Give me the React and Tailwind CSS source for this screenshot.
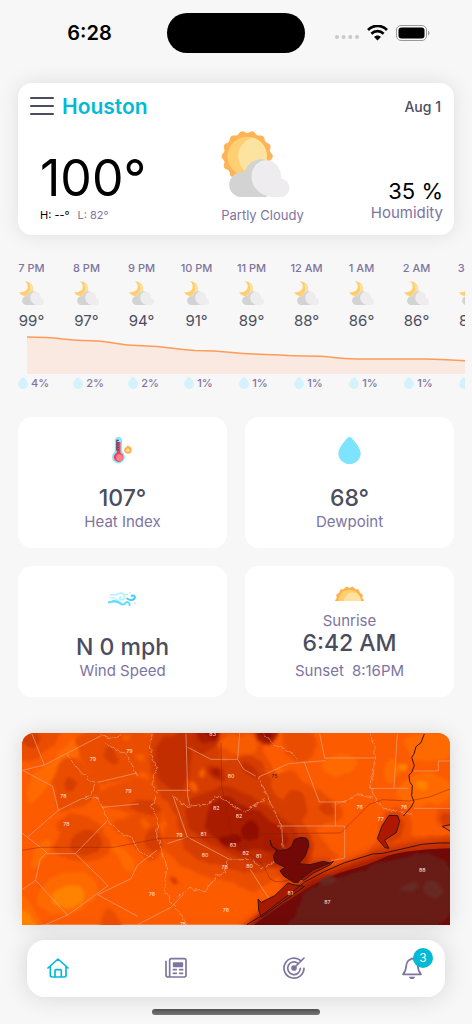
import React from 'react';

const hours = [
    { time: '7 PM', temp: 99, rain: 4 },
    { time: '8 PM', temp: 97, rain: 2 },
    { time: '9 PM', temp: 94, rain: 2 },
    { time: '10 PM', temp: 91, rain: 1 },
    { time: '11 PM', temp: 89, rain: 1 },
    { time: '12 AM', temp: 88, rain: 1 },
    { time: '1 AM', temp: 86, rain: 1 },
    { time: '2 AM', temp: 86, rain: 1 },
    { time: '3 AM', temp: 85, rain: 1 },
];

const scallop = (cx, cy, r, count) => {
    const points = [];
    for (let i = 0; i <= 240; i++) {
        const a = (i / 240) * Math.PI * 2;
        const radius = r * (0.955 + 0.045 * Math.cos(count * a));
        points.push(`${(cx + radius * Math.cos(a)).toFixed(1)} ${(cy + radius * Math.sin(a)).toFixed(1)}`);
    }
    return `M${points.join('L')}Z`;
};

// closed curve rounded through the midpoints of the given outline
const blob = (outline) => {
    const pts = outline.split(' ').map((p) => p.split(',').map(Number));
    const mid = (a, b) => `${(a[0] + b[0]) / 2} ${(a[1] + b[1]) / 2}`;
    const last = pts[pts.length - 1];
    const curves = pts.map((p, i) => `Q${p[0]} ${p[1]} ${mid(p, pts[(i + 1) % pts.length])}`);
    return `M${mid(last, pts[0])}${curves.join('')}Z`;
};

function Cloud() {
    return (
        <>
            <path fill="#d3d3d4" d="M61 198a37 37 0 0 1 0-74c2 0 5 0 8 1a57 57 0 0 1 55-41c30 0 30 114 10 114z" />
            <path fill="#eeecee" d="M152 198c-34-4-61-29-61-61 0-28 19-49 45-49 25 0 44 22 45 55a28 28 0 0 1 2 55z" />
        </>
    );
}

function SunCloud() {
    return (
        <svg viewBox="0 0 212 198" className="h-[66px] w-[71px]" aria-hidden="true">
            <path fill="#ffb357" d={scallop(78, 76, 77, 14)} />
            <circle cx="78" cy="76" r="59" fill="#ffcf71" />
            <path fill="#fde3a0" d="M95 20c25 6 42 29 42 56s-17 50-42 56c-26-6-44-29-44-56s18-50 44-56z" />
            <Cloud />
        </svg>
    );
}

function MoonCloud() {
    return (
        <svg viewBox="0 0 75 70" className="h-6 w-[26px]" aria-hidden="true">
            <path fill="#ffce71" d="M16 1c14 0 25 10 25 22S31 44 20 44C10 44 3 39 0 32c14 3 25-5 25-16 0-6-3-11-9-15z" />
            <path fill="#fde3a0" d="M28 6c8 4 12 10 12 17 0 11-9 20-20 20 12-8 17-22 8-37z" />
            <g transform="scale(.355)">
                <Cloud />
            </g>
        </svg>
    );
}

function Drop({ className }) {
    return (
        <svg viewBox="0 0 67 81" className={className} fill="currentColor" aria-hidden="true">
            <path d="M33.500 0c3 0 5 2 7 4C53 18 67 35 67 49a33.500 32 0 0 1-67 0C0 35 14 18 26.500 4c2-2 4-4 7-4z" />
        </svg>
    );
}

function Thermometer() {
    return (
        <svg viewBox="0 0 62 80" className="h-[27px] w-[21px]" aria-hidden="true">
            <path fill="#8ae6fc" d="M8 11a11 11 0 0 1 22 0v33a19 19 0 1 1-22 0z" />
            <path fill="#ee4257" d="M14 15h11v32a14 14 0 1 1-11 0z" />
            <circle cx="22" cy="61" r="10" fill="#ff8091" />
            <path stroke="#59415a" strokeWidth="3" d="M13 10h7M13 17h7M13 24h7M13 31h7M13 38h7M14 9v31" />
            <path fill="#ffb04b" d="M47 25c3 0 4 4 6 4 4 3 6 6 5 10a11 11 0 0 1-22-1c0-4 3-7 6-8 2-1 2-5 5-5z" />
            <circle cx="47" cy="39" r="5" fill="#fee3a0" />
        </svg>
    );
}

function Wind() {
    return (
        <svg viewBox="0 0 86 44" className="h-[15px] w-[29px]" fill="none" strokeLinecap="round" aria-hidden="true">
            <g stroke="#b4f0ff" strokeWidth="5">
                <path d="M8 8h13c7 0 9-5 17-5 14 0 14 20 3 20-8 0-8-9-2-9" />
                <path d="M3 14h1M10 17c10-2 12 8 22 7M52 7h6M65 1v2M77 33h5" strokeWidth="4" />
            </g>
            <g stroke="#64dcff" strokeWidth="6">
                <path d="M2 31c16-6 25-4 34 3 7 5 13 3 15-1 5-7 14-1 13 6" />
                <path d="M14 25c14-1 18 3 25 7" strokeWidth="3" />
            </g>
            <path stroke="#41cdf7" strokeWidth="6" d="M57 19c7 6 16 6 21 1 5-6-1-12-8-9" />
        </svg>
    );
}

function Sunrise() {
    return (
        <svg viewBox="0 0 86 44" className="h-[15px] w-[29px]" aria-hidden="true">
            <path fill="#ffb04f" d={scallop(43, 44, 43, 14)} />
            <circle cx="43" cy="44" r="33" fill="#ffcf71" />
            <circle cx="52" cy="44" r="25" fill="#fde3a0" />
        </svg>
    );
}

function HomeIcon() {
    return (
        <svg viewBox="0 0 66 66" className="size-[22px]" fill="none" stroke="currentColor" strokeWidth="5" strokeLinecap="round" strokeLinejoin="round">
            <path d="M3 33 33 6l30 27M10 29v26c0 3 2 5 5 5h37c3 0 5-2 5-5V29M24 59V41c0-2 1-3 3-3h13c2 0 3 1 3 3v18" />
        </svg>
    );
}

function NewsIcon() {
    return (
        <svg viewBox="0 0 66 66" className="size-[22px]" fill="none" stroke="currentColor" strokeWidth="5" strokeLinecap="round" strokeLinejoin="round">
            <path d="M14 56V10c0-3 2-5 5-5h39c3 0 5 2 5 5v45c0 3-2 5-5 5H10c-4 0-7-3-7-7V13M14 56c0 2-1 4-4 4" />
            <path fill="currentColor" d="M26 18h26v10H26z" />
            <path d="M25 38h9M44 38h9M25 49h9M44 49h9" />
        </svg>
    );
}

function TargetIcon() {
    return (
        <svg viewBox="0 0 66 66" className="size-[22px]" fill="none" stroke="currentColor" strokeWidth="5" strokeLinecap="round">
            <path d="M53 11A30 30 0 1 0 63 34" />
            <path d="M45 19A19 19 0 1 0 52 34" />
            <path d="M33 33 63 3" />
            <circle cx="33" cy="33" r="6" fill="currentColor" />
        </svg>
    );
}

function BellIcon() {
    return (
        <svg viewBox="0 0 66 66" className="size-[22px]" fill="none" stroke="currentColor" strokeWidth="5" strokeLinecap="round" strokeLinejoin="round">
            <path d="M33 4c2 0 3 1 3 3 9 2 13 9 14 18 1 13 2 18 10 27H6c8-9 9-14 10-27 1-9 5-16 14-18 0-2 1-3 3-3z" />
            <path fill="currentColor" stroke="none" d="M24 59h18c-1 4-4 7-9 7s-8-3-9-7z" />
        </svg>
    );
}

function StatusBar() {
    return (
        <div className="grid grid-cols-[1fr_138px_1fr] items-center pt-[13px] text-black">
            <span className="pl-3 text-center text-[20px] leading-6 font-semibold">6:28</span>
            <div className="h-10 rounded-full bg-black" />
            <div className="flex items-center justify-center gap-2 pr-3">
                <svg viewBox="0 0 24 14" className="h-[14px] w-6 fill-[#c9c9c9]" aria-hidden="true">
                    <circle cx="2" cy="11" r="2" />
                    <circle cx="8.600" cy="11" r="2" />
                    <circle cx="15.300" cy="11" r="2" />
                    <circle cx="22" cy="11" r="2" />
                </svg>
                <svg viewBox="0 0 62 46" className="h-4 w-[21px]" fill="none" stroke="#000" strokeWidth="8" aria-hidden="true">
                    <path d="M3 14C19-2 43-2 59 14M13 25c10-10 26-10 36 0" />
                    <path fill="#000" stroke="none" d="M21 35c6-6 14-6 20 0L31 45z" />
                </svg>
                <svg viewBox="0 0 34 16" className="h-4 w-[34px]" aria-hidden="true">
                    <rect x=".5" y=".5" width="30" height="15" rx="4.500" fill="none" stroke="#999" />
                    <rect x="2.500" y="2.500" width="26" height="11" rx="3" />
                    <path fill="#999" d="M32 5.500c2 1 2 4 0 5z" />
                </svg>
            </div>
        </div>
    );
}

function CurrentWeather() {
    return (
        <section className="mx-[18px] mt-[30px] rounded-[14px] bg-white py-3 pr-[11px] pl-3 shadow-[0_0_20px_rgba(0,0,0,0.1)]">
            <div className="flex items-center">
                <button type="button" aria-label="Menu" className="text-[#4b4d5e]">
                    <svg viewBox="0 0 24 20" className="h-5 w-6" stroke="currentColor" strokeWidth="2" strokeLinecap="round">
                        <path d="M1 1h22M1 9h22M1 17h22" />
                    </svg>
                </button>
                <h1 className="ml-2 text-[21px] leading-6 font-semibold text-[#00bad6]">Houston</h1>
                <span className="ml-auto pr-[2px] text-[14px] leading-6 font-medium text-[#4b4d5e]">Aug 1</span>
            </div>
            <div className="mt-3 flex items-end justify-between pl-[10px]">
                <div>
                    <p className="text-[50px] leading-[50px] text-black">100°</p>
                    <p className="mt-1 flex gap-2 text-[11px] leading-4">
                        <span className="text-black">H: --°</span>
                        <span className="text-[#7d749f]">L: 82°</span>
                    </p>
                </div>
                <div className="ml-2">
                    <SunCloud />
                    <p className="mt-[10px] text-[13px] leading-4 text-[#7d749f]">Partly Cloudy</p>
                </div>
                <div className="text-right">
                    <p className="text-[22px] leading-6 text-black">35 %</p>
                    <p className="text-[15px] leading-5 text-[#7d749f]">Houmidity</p>
                </div>
            </div>
        </section>
    );
}

function Hourly() {
    return (
        <section className="mt-[25px] mr-[7px] overflow-x-auto pl-1 [scrollbar-width:none]">
            <div className="w-max">
                <div className="flex">
                    {hours.map((hour) => (
                        <div key={hour.time} className="flex w-[55px] flex-col items-center">
                            <span className="text-[11px] leading-4 font-medium text-[#7d749f]">{hour.time}</span>
                            <div className="mt-[5px]">
                                <MoonCloud />
                            </div>
                            <span className="mt-[6px] text-[15px] leading-5 text-[#4b4d5e]">{hour.temp}°</span>
                        </div>
                    ))}
                </div>
                <svg viewBox="0 0 468 44" className="ml-[23px] h-11 w-[468px]" aria-hidden="true">
                    <path fill="#f9e9e1" d="M0 6C34 6 34 9 56 9.500 90 10 88 14 110 14.500c36 1 36 4 58 5 34 0 36 3 58 3.500s36 2 52 2c32 0 24 2.500 52 3h66c20 0 30 2 60 2V43H0z" />
                    <path fill="none" stroke="#ff9b57" strokeWidth="1.500" d="M0 6C34 6 34 9 56 9.500 90 10 88 14 110 14.500c36 1 36 4 58 5 34 0 36 3 58 3.500s36 2 52 2c32 0 24 2.500 52 3h66c20 0 30 2 60 2" />
                </svg>
                <div className="flex pl-[2px]">
                    {hours.map((hour) => (
                        <div key={hour.time} className="flex w-[55px] items-center justify-center gap-[3px]">
                            <Drop className="h-3 w-[10px] text-[#d3f2fc]" />
                            <span className="text-[11px] leading-4 font-medium text-[#7d749f]">{hour.rain}%</span>
                        </div>
                    ))}
                </div>
            </div>
        </section>
    );
}

function StatCard({ icon, value, label }) {
    return (
        <div className="flex h-[131px] flex-col items-center rounded-[14px] bg-white pt-[18px] pb-4">
            <div className="flex h-[30px] items-center">{icon}</div>
            <p className="mt-auto text-[23px] leading-7 font-medium text-[#4b4d5e]">{value}</p>
            <p className="text-[15px] leading-5 text-[#7d749f]">{label}</p>
        </div>
    );
}

function SunCard() {
    return (
        <div className="flex h-[131px] flex-col items-center rounded-[14px] bg-white pt-5 pb-[14px]">
            <Sunrise />
            <p className="mt-auto text-[15px] leading-5 text-[#7d749f]">Sunrise</p>
            <p className="text-[23px] leading-6 font-medium text-[#4b4d5e]">6:42 AM</p>
            <p className="mt-1 flex gap-2 text-[15px] leading-6 text-[#7d749f]">
                <span>Sunset</span>
                <span>8:16PM</span>
            </p>
        </div>
    );
}

const readings = [
    [572, 4, '83'], [322, 54, '79'], [213, 78, '79'], [627, 131, '80'], [319, 174, '79'], [124, 190, '78'],
    [583, 225, '82'], [651, 250, '82'], [133, 274, '78'], [472, 308, '79'], [544, 304, '81'], [633, 336, '83'],
    [671, 360, '82'], [549, 366, '80'], [710, 371, '81'], [683, 399, '80'], [608, 404, '78'], [390, 485, '76'],
    [612, 533, '76'], [483, 575, '75'], [1013, 222, '76'], [1146, 222, '76'], [1076, 260, '77'],
    [1201, 411, '88'], [916, 509, '87'], [805, 482, '81'],
];

// temperature bands, painted in order
const bands = [
    {
        fill: '#ff6b00',
        shapes: [
            '10,190 30,120 90,90 130,40 190,-10 230,-10 180,60 110,110 60,190 20,220',
            '40,520 60,450 150,400 240,450 210,510 130,555',
            '-20,470 30,510 70,600 -20,600',
            '20,400 50,330 90,310 80,360 40,410',
            '260,320 320,350 345,420 310,410',
            '900,80 980,60 1020,90 960,130 900,120',
            '1090,90 1120,70 1140,110 1110,150 1080,140',
            '1120,160 1200,110 1270,130 1300,200 1180,225 1130,200',
            '1160,0 1300,0 1300,80 1200,90 1140,50',
            '700,110 760,100 800,120 750,145',
        ],
    },
    {
        fill: '#ff8200',
        shapes: [
            '80,490 150,445 195,480 170,525 100,525',
            '-20,520 30,550 50,600 -20,600',
            '1180,140 1210,140 1222,170 1180,170',
            '1130,92 1155,95 1150,122 1125,120',
        ],
    },
    {
        fill: '#eb4e00',
        shapes: [
            '-20,-30 130,-30 110,30 60,60 20,90 -20,90',
            '90,130 120,70 170,70 210,140 245,160 200,215 130,235 100,230 100,170',
            '150,10 250,-30 360,-30 410,40 400,100 350,130 280,140 230,160 190,110 170,60',
            '230,170 330,130 400,140 410,200 430,260 400,280 330,240 250,220 220,200',
            '90,270 150,240 220,260 250,300 275,350 230,385 140,385 80,350 120,310',
            '270,270 330,240 400,260 420,300 430,350 390,390 340,350 310,310 270,290',
            '390,-30 500,-30 740,-30 720,70 760,100 770,150 850,230 900,330 960,370 900,400 760,430 690,490 640,440 560,440 500,410 430,370 420,300 440,260 380,180 370,80',
            '770,-30 870,-30 885,60 850,90 790,75',
            '720,160 790,110 830,130 900,180 965,220 960,260 900,280 850,300 780,330 710,250',
            '1030,370 1070,320 1080,230 1150,220 1175,280 1160,320 1300,300 1300,340 1050,390',
            '1235,250 1260,220 1300,220 1300,280 1245,280',
            '235,540 260,520 300,560 290,600 240,600',
        ],
    },
    {
        fill: '#d63c00',
        shapes: [
            '160,300 210,285 245,320 235,360 170,370 135,340',
            '250,50 270,35 292,80 272,100 242,80',
            '120,145 150,120 165,170 130,175',
            '320,210 380,195 420,230 400,250 340,240',
            '370,300 400,280 430,330 410,360 365,350',
            '400,-30 560,-30 590,60 610,90 680,60 720,90 750,140 760,190 830,240 880,330 860,400 760,400 690,430 610,400 540,390 480,340 470,280 450,220 400,170 380,60',
            '790,190 810,160 850,190 860,260 800,290 760,230',
            '890,210 930,200 945,245 895,245',
            '1085,310 1095,240 1145,235 1145,310 1100,340',
            '1250,245 1300,235 1300,275 1255,275',
            '-10,10 40,-10 60,30 20,55',
            '440,430 460,430 465,455 450,455',
        ],
    },
    {
        fill: '#c22d00',
        shapes: [
            '400,20 470,0 500,-30 510,80 490,180 440,170 400,130',
            '500,-30 610,-30 570,60 510,70',
            '500,190 560,180 600,150 680,185 740,220 790,260 840,310 860,390 780,400 680,390 600,350 530,320 485,260',
            '550,90 600,100 620,150 565,140',
            '655,80 700,100 715,140 665,130',
        ],
    },
    {
        fill: '#a91a00',
        shapes: [
            '515,-30 610,-30 575,30 530,35',
            '555,220 600,185 650,205 720,240 770,280 810,320 770,360 700,345 640,360 590,330 550,290',
            '563,110 590,103 600,137 575,130',
            '695,-30 775,-30 765,20 730,40 700,15',
        ],
    },
    {
        fill: '#920b00',
        shapes: [
            '655,285 690,255 725,290 700,325 655,315',
            '585,315 640,298 665,325 610,345',
            '545,-30 600,-30 585,15 550,10',
            '706,-30 755,-30 745,18 720,20',
        ],
    },
    {
        fill: '#f85c00',
        shapes: [
            '585,20 640,0 705,10 712,60 650,65 595,50',
            '525,115 545,102 553,130 530,135',
            '503,150 530,153 520,178 505,172',
            '300,5 330,5 330,22 305,22',
            '340,60 370,65 365,90 345,85',
            '350,260 385,260 385,282 355,280',
        ],
    },
];

function HeatMap() {
    return (
        <svg viewBox="0 0 1284 575" className="block w-full" role="img" aria-label="Temperature map">
            <defs>
                <filter id="rough" x="-5%" y="-5%" width="110%" height="110%">
                    <feTurbulence type="fractalNoise" baseFrequency="0.03" numOctaves="1" seed="4" />
                    <feDisplacementMap in="SourceGraphic" scale="22" xChannelSelector="R" yChannelSelector="G" />
                    <feGaussianBlur stdDeviation="4" />
                </filter>
                <filter id="jagged">
                    <feTurbulence type="fractalNoise" baseFrequency="0.06" numOctaves="2" seed="9" />
                    <feDisplacementMap in="SourceGraphic" scale="16" xChannelSelector="R" yChannelSelector="G" />
                </filter>
                <filter id="soft" x="-10%" y="-10%" width="120%" height="120%">
                    <feGaussianBlur stdDeviation="9" />
                </filter>
            </defs>
            <path fill="#fc5b00" d="M0 0h1284v575H0z" />
            <g filter="url(#rough)">
                {bands.map((band) => (
                    <g key={band.fill} fill={band.fill}>
                        {band.shapes.map((shape) => (
                            <path key={shape} d={blob(shape)} />
                        ))}
                    </g>
                ))}
            </g>

            {/* gulf */}
            <path fill="none" stroke="#c83000" strokeWidth="34" filter="url(#soft)" d="M665 600l80-65 80-60 70-46 90-30 90-36 100-18 120-12" />
            <path fill="#730a08" stroke="#8e0d04" strokeWidth="6" filter="url(#soft)" d="M662 610l60-65 90-55 60-40 130-45 80-28 100-14 140-14v270z" />
            <path fill="#6f0a09" d="M690 580q110-80 175-118t120-52 100-36 200-28v240H690z" />
            <path fill="#691c18" filter="url(#rough)" d={blob('760,620 830,530 850,470 920,440 1020,420 1080,380 1300,350 1300,620')} />
            <g fill="#662923" filter="url(#rough)">
                <path d={blob('890,440 930,425 945,445 920,460 890,455')} />
                <path d={blob('1130,470 1180,440 1195,460 1170,480 1135,480')} />
                <path d={blob('1205,450 1240,440 1275,480 1240,500 1205,485')} />
            </g>

            {/* county lines */}
            <g fill="none" stroke="#e8a17d" strokeWidth="3" opacity=".7" filter="url(#jagged)">
                <path d="M236 8l34 8 28-14M248 28l35 24 30 14 22 38 12 24M136 64l30 44 35 32 22 10M390 0l-5 45 12 50 14 10-20 25 4 40 14 10-20 40 20 40-5 40 18 60 12 40-4 40-4 30 24 40 45 58 7 40 18 50M223 150l-18 35-26 12M191 197l33-4 20 35 20 44 36 30 30 12 20 40 40 20M454 192l40 28 60-6 34-24 80 48 60-42M615 380l-5 40-30 10-30 46-50-10-36 25M721 0l30 30 60 30 15 22M622 379l60-3 14 8 20 24 25-10 40-22M710 132l53 116 16 30 4 70M1042 0l18 40-5 70-10 40 10 40 28 38 60 10 26 6M940 212l38-10 30-20 42 10" />
            </g>
            <g fill="none" stroke="#e8a17d" strokeWidth="3" opacity=".7">
                <path d="M30 3l37 93M2 112l65-16 170-88M2 112l90 48 17 72M17 312l92-80 70-35M0 300l74 58-20 22-13 60M0 470l41-28 96 105M74 362h86l97-100M160 362l98 96-119 87-69 30M227 148l118-28M240 223l110-10M347 550l-120-65 100-48 19-40 60-46M347 575l100-52 38-40M406 172h98M492 2l5 185 6 30M497 43l70 36h80l6-79M647 79l18 30 36 20M454 192l42 120-60 20M496 312l126 67M710 132l90-40 110-9M893 2l15 73h152M846 85l46 122h80M940 207v72M765 279h203v96l-40 8M1126 2l-10 164M1050 166h110M1176 114h73V84h35M1176 226h108M685 410l54 84" />
            </g>
            <g fill="none" stroke="#872000" strokeWidth="3" opacity=".45">
                <path d="M0 352l54-9h220l140-27 230-4 90-10 222-2 86-86 40-14 80 4 60-12 62-24M597 30l2 130 31 150M655 350q70 30 80 70t70 20" />
                <path d="M613 310h60v30h-60z" />
            </g>

            {/* bays and coastline */}
            <path fill="none" stroke="#9c1500" strokeWidth="14" opacity=".6" filter="url(#soft)" d="M745 330l40 25 30-35 35-5 10 20-20 60 70-5-60 60-50 10-30-80z" />
            <g stroke="#351516" strokeWidth="3" strokeLinejoin="round">
                <path fill="#730907" d="M744 322l5 18 20 12 25-2 15-10 8-20 17-6q20-2 24 8l2 18-11 30-18 22 33 3 40-10 20 5-40 15-50 35-5 8h-15l-30-20-10-15 15-10-30-15-5-20 10-15-14-13z" />
                <path fill="#a81a00" d="M708 498l10 10 40-20 40-38 15 5 35 5-130 92-8-20zM837 438l38-28 60-25-10 10-50 25-30 22z" />
                <path fill="#ae1800" d="M1101 247l26 1 6 17-10 34-35 22 13 25-12-2-23-27 14-38z" />
                <path fill="none" d="M675 575l40-25 105-80 28-23 60-32 60-26 84-26 30-2 58-13 60-14 50-4h34" />
                <path fill="none" d="M1207 3l-10 26-15 12-6 22-7 10 8 25-8 20-8 8 2 20 8 12-2 30 7 18-8 16-24 27M1284 275l-23 5 23 14" />
            </g>

            <g fill="#ffe3dc" fontSize="16" textAnchor="middle">
                {readings.map(([x, y, value]) => (
                    <text key={`${x}-${y}`} x={x} y={y + 5}>{value}</text>
                ))}
                <text x="757" y="134" fill="#33251a">75</text>
            </g>
        </svg>
    );
}

function BottomNav() {
    return (
        <nav className="mx-[27px] mt-[15px] flex h-[57px] items-center justify-between rounded-[18px] bg-white px-5 text-[#7d749f] shadow-[0_0_24px_rgba(0,0,0,0.14)]">
            <button type="button" aria-label="Home" className="text-[#00bad6]"><HomeIcon /></button>
            <button type="button" aria-label="News"><NewsIcon /></button>
            <button type="button" aria-label="Radar"><TargetIcon /></button>
            <button type="button" aria-label="Alerts" className="relative mr-[2px]">
                <BellIcon />
                <span className="absolute -top-[9px] left-3 size-5 rounded-full bg-[#00bad6] text-center text-[12px] leading-5 text-white">3</span>
            </button>
        </nav>
    );
}

export default function App() {
    return (
        <div className="flex min-h-screen flex-col overflow-hidden bg-[#f7f7f7] font-[Inter,sans-serif]">
            <StatusBar />
            <main>
                <CurrentWeather />
                <Hourly />
                <section className="mx-[18px] mt-[26px] grid grid-cols-2 gap-[18px]">
                    <StatCard icon={<Thermometer />} value="107°" label="Heat Index" />
                    <StatCard icon={<Drop className="h-[27px] w-[23px] text-[#7de3ff]" />} value="68°" label="Dewpoint" />
                    <StatCard icon={<Wind />} value="N 0 mph" label="Wind Speed" />
                    <SunCard />
                </section>
                <section className="mx-[22px] mt-9 overflow-hidden rounded-t-[12px] shadow-[0_0_20px_rgba(0,0,0,0.12)]">
                    <HeatMap />
                </section>
            </main>
            <BottomNav />
            <div className="mx-auto mt-3 h-[6px] w-[168px] rounded-full bg-linear-to-b from-[#505050] to-[#777]" />
        </div>
    );
}
